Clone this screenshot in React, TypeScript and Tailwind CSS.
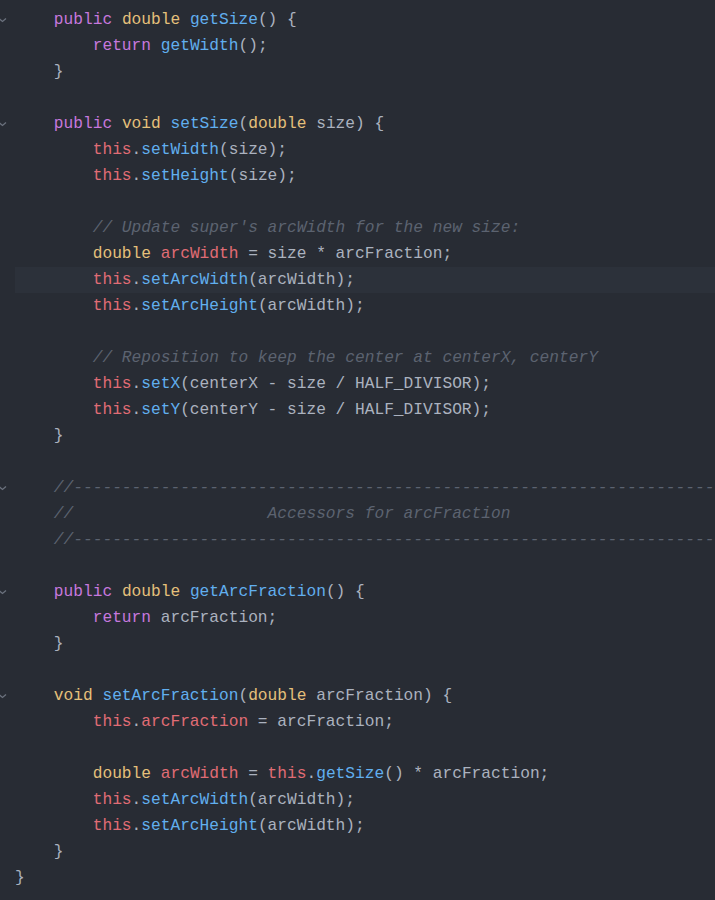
type Tok = [string, string];

const K = "text-[#c678dd]"; // keyword
const T = "text-[#e5c07b]"; // type
const F = "text-[#61afef]"; // function
const R = "text-[#e06c75]"; // this / fields
const D = "text-[#abb2bf]"; // default
const C = "text-[#5c6370] italic"; // comment

type Line = { toks: Tok[]; fold?: boolean; active?: boolean };

const dashes = "-".repeat(90);

const lines: Line[] = [
  { fold: true, toks: [["    ", D], ["public", K], [" ", D], ["double", T], [" ", D], ["getSize", F], ["() {", D]] },
  { toks: [["        ", D], ["return", K], [" ", D], ["getWidth", F], ["();", D]] },
  { toks: [["    }", D]] },
  { toks: [] },
  { fold: true, toks: [["    ", D], ["public", K], [" ", D], ["void", T], [" ", D], ["setSize", F], ["(", D], ["double", T], [" size) {", D]] },
  { toks: [["        ", D], ["this", R], [".", D], ["setWidth", F], ["(size);", D]] },
  { toks: [["        ", D], ["this", R], [".", D], ["setHeight", F], ["(size);", D]] },
  { toks: [] },
  { toks: [["        ", D], ["// Update super's arcWidth for the new size:", C]] },
  { toks: [["        ", D], ["double", T], [" ", D], ["arcWidth", R], [" = size * arcFraction;", D]] },
  { active: true, toks: [["        ", D], ["this", R], [".", D], ["setArcWidth", F], ["(arcWidth);", D]] },
  { toks: [["        ", D], ["this", R], [".", D], ["setArcHeight", F], ["(arcWidth);", D]] },
  { toks: [] },
  { toks: [["        ", D], ["// Reposition to keep the center at centerX, centerY", C]] },
  { toks: [["        ", D], ["this", R], [".", D], ["setX", F], ["(centerX - size / HALF_DIVISOR);", D]] },
  { toks: [["        ", D], ["this", R], [".", D], ["setY", F], ["(centerY - size / HALF_DIVISOR);", D]] },
  { toks: [["    }", D]] },
  { toks: [] },
  { fold: true, toks: [["    ", D], ["//" + dashes, C]] },
  { toks: [["    ", D], ["//                    Accessors for arcFraction", C]] },
  { toks: [["    ", D], ["//" + dashes, C]] },
  { toks: [] },
  { fold: true, toks: [["    ", D], ["public", K], [" ", D], ["double", T], [" ", D], ["getArcFraction", F], ["() {", D]] },
  { toks: [["        ", D], ["return", K], [" arcFraction;", D]] },
  { toks: [["    }", D]] },
  { toks: [] },
  { fold: true, toks: [["    ", D], ["void", T], [" ", D], ["setArcFraction", F], ["(", D], ["double", T], [" arcFraction) {", D]] },
  { toks: [["        ", D], ["this", R], [".", D], ["arcFraction", R], [" = arcFraction;", D]] },
  { toks: [] },
  { toks: [["        ", D], ["double", T], [" ", D], ["arcWidth", R], [" = ", D], ["this", R], [".", D], ["getSize", F], ["() * arcFraction;", D]] },
  { toks: [["        ", D], ["this", R], [".", D], ["setArcWidth", F], ["(arcWidth);", D]] },
  { toks: [["        ", D], ["this", R], [".", D], ["setArcHeight", F], ["(arcWidth);", D]] },
  { toks: [["    }", D]] },
  { toks: [["}", D]] },
];

function Chevron() {
  return (
    <svg width="9" height="6" viewBox="0 0 9 6" className="text-[#6b717d]">
      <path d="M1 1.5 L4.5 4.5 L8 1.5" fill="none" stroke="currentColor" strokeWidth="1.3" />
    </svg>
  );
}

export default function App() {
  return (
    <div className="h-[900px] w-[715px] overflow-hidden bg-[#282c34] pt-[7px] font-['Liberation_Mono',monospace] text-[16.2px]">
      {lines.map((line, i) => (
        <div key={i} className="flex h-[26px] items-center">
          <div className="-ml-[2px] flex w-[17px] shrink-0 items-center">
            {line.fold ? <Chevron /> : null}
          </div>
          <div
            className={`flex h-full flex-1 items-center overflow-hidden whitespace-pre ${
              line.active ? "bg-[#2c313a]" : ""
            }`}
          >
            {line.toks.map(([text, cls], j) => (
              <span key={j} className={cls}>
                {text}
              </span>
            ))}
          </div>
        </div>
      ))}
    </div>
  );
}
